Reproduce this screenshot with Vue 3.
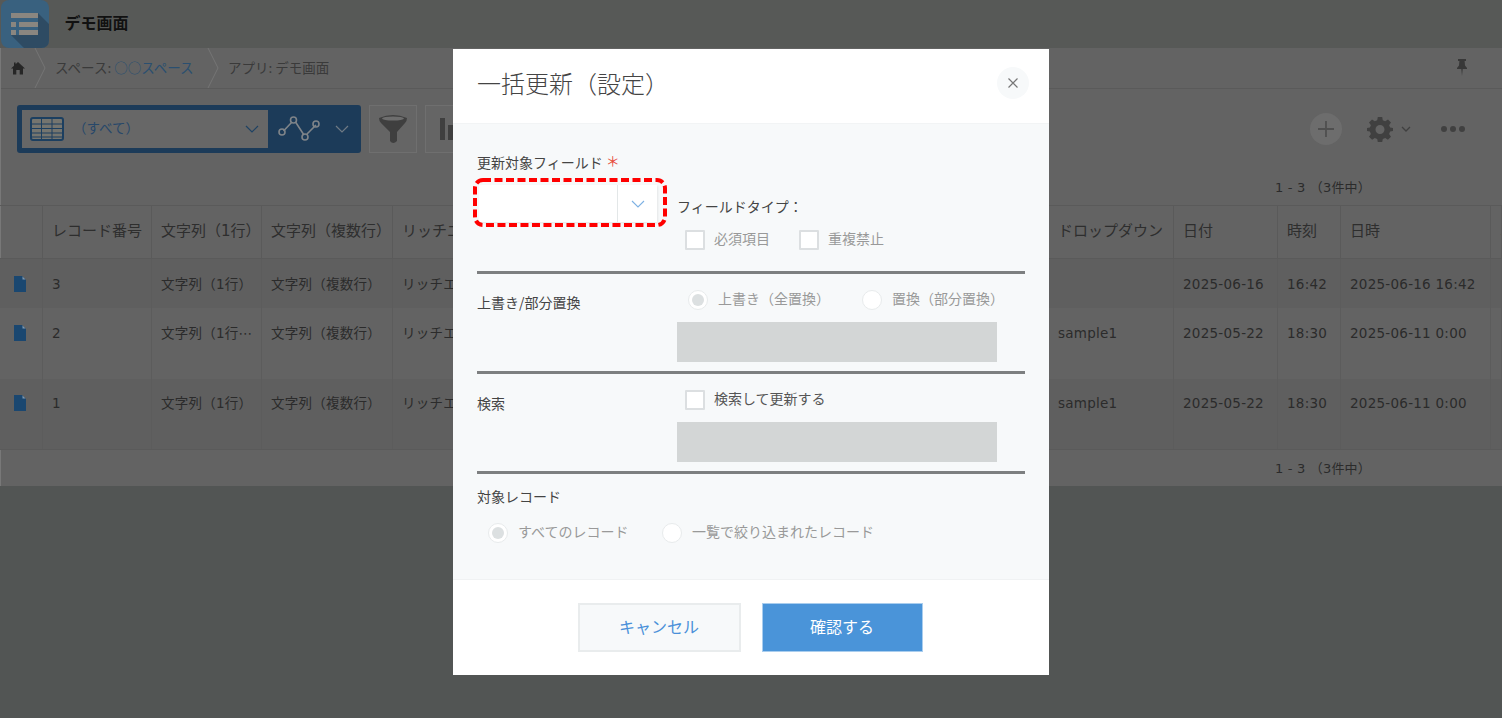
<script setup>
const cols = '43px 109px 110px 131px 656px 125px 104px 63px 150px 11px'
const headers = ['', 'レコード番号', '文字列（1行）', '文字列（複数行）', 'リッチエディター', 'ドロップダウン', '日付', '時刻', '日時', 'ユーザー']
const rows = [
  { id: 3, c1: '文字列（1行）', drop: '', d: '2025-06-16', t: '16:42', dt: '2025-06-16 16:42', cls: 'r1' },
  { id: 2, c1: '文字列（1行⋯', drop: 'sample1', d: '2025-05-22', t: '18:30', dt: '2025-06-11 0:00', cls: 'r2' },
  { id: 1, c1: '文字列（1行）', drop: 'sample1', d: '2025-05-22', t: '18:30', dt: '2025-06-11 0:00', cls: 'r3' }
]
</script>

<template>
  <div class="page">
    <header class="top">
      <svg class="appicon" width="49" height="48" viewBox="0 0 49 48">
        <rect x="1" width="48" height="48" rx="8" fill="#39617f" />
        <path d="M38 13 L49 24 L49 40 Q49 48 41 48 L24 48 L11 35 L38 35 Z" fill="#2e4b63" />
        <rect x="11" y="13" width="27" height="5" fill="#8a8680" />
        <rect x="11" y="22" width="5" height="5" fill="#8a8680" />
        <rect x="19" y="22" width="19" height="5" fill="#8a8680" />
        <rect x="11" y="30" width="5" height="5" fill="#8a8680" />
        <rect x="19" y="30" width="19" height="5" fill="#8a8680" />
      </svg>
      <span class="apptitle">デモ画面</span>
    </header>

    <div class="main">
      <nav class="crumbs">
        <svg class="home" width="16" height="16" viewBox="0 0 16 16"><path d="M8 2 L15 8.5 L13 8.5 L13 14.5 L9.7 14.5 L9.7 10 L6.3 10 L6.3 14.5 L3 14.5 L3 8.5 L1 8.5 L4 5.7 L4 2.5 L5.6 2.5 L5.6 4.2 Z" fill="#262626" /></svg>
        <svg class="sep" width="12" height="40" viewBox="0 0 12 40"><path d="M1 0 L11 20 L1 40" fill="none" stroke="#757575" /></svg>
        <span class="crumb first">スペース: <a>○○スペース</a></span>
        <svg class="sep" width="12" height="40" viewBox="0 0 12 40"><path d="M1 0 L11 20 L1 40" fill="none" stroke="#757575" /></svg>
        <span class="crumb">アプリ: デモ画面</span>
        <svg class="pin" width="12" height="18" viewBox="0 0 12 18"><path d="M2 1 H10 V3 H8.600 L9 7.500 L11 10 V11 H6.700 L6 18 L5.300 11 H1 V10 L3 7.500 L3.400 3 H2 Z" fill="#383838" /></svg>
      </nav>

      <div class="toolbar">
        <div class="viewbox">
          <div class="viewsel">
            <svg width="34" height="24" viewBox="0 0 34 24">
              <rect x="1" y="1" width="32" height="22" rx="2" fill="#75756f" stroke="#1c3f60" stroke-width="2" />
              <path d="M1 7 H33 M1 11.500 H33 M1 16 H33 M1 20 H33 M11.500 2 V23 M22 2 V23" stroke="#1c3f60" stroke-width="1" fill="none" />
            </svg>
            <span class="viewname">（すべて）</span>
            <svg class="chev" width="14" height="8" viewBox="0 0 14 8"><path d="M1 1 L7 7 L13 1" fill="none" stroke="#1f4263" stroke-width="1.200" /></svg>
          </div>
          <svg class="graph" width="42" height="26" viewBox="0 0 42 26">
            <path d="M5.500 15 L14 6 M17.500 6 L26 19 M29 18 L38 9" stroke="#7f8489" stroke-width="1.600" fill="none" />
            <circle cx="4" cy="16" r="3" fill="none" stroke="#7f8489" stroke-width="1.600" />
            <circle cx="15.500" cy="4" r="3" fill="none" stroke="#7f8489" stroke-width="1.600" />
            <circle cx="27" cy="21" r="3" fill="none" stroke="#7f8489" stroke-width="1.600" />
            <circle cx="38" cy="8" r="3" fill="none" stroke="#7f8489" stroke-width="1.600" />
          </svg>
          <svg class="chev2" width="14" height="8" viewBox="0 0 14 8"><path d="M1 1 L7 7 L13 1" fill="none" stroke="#6f7a85" stroke-width="1.200" /></svg>
        </div>
        <button class="tool">
          <svg width="30" height="30" viewBox="0 0 30 30">
            <path d="M1 4 Q15 -2 29 4 Q29 7 27 9 L19 18 V27 Q15 31 12 27 V18 L3 9 Q1 7 1 4 Z" fill="#3f3f3f" />
            <ellipse cx="15" cy="4.500" rx="11" ry="2" fill="#6e6e6e" />
          </svg>
        </button>
        <button class="tool">
          <svg width="30" height="30" viewBox="0 0 30 30">
            <rect x="6" y="4" width="5" height="22" fill="#3f3f3f" />
            <rect x="14" y="11" width="5" height="15" fill="#3f3f3f" />
          </svg>
        </button>
        <div class="tool-right">
          <span class="plus"><svg width="20" height="20" viewBox="0 0 20 20"><path d="M10 2 V18 M2 10 H18" stroke="#4f4f4f" stroke-width="1.800" /></svg></span>
          <svg class="gear" width="26" height="26" viewBox="0 0 26 26">
            <path d="M10.800 1 H15.200 L15.800 4.300 L18.200 5.300 L21 3.400 L24 6.500 L22.100 9.200 L23.100 11.600 L26 12 V15 L23.100 15.600 L22.100 18 L24 20.700 L20.900 23.800 L18.200 21.900 L15.800 22.900 L15.200 26 H10.800 L10.200 22.900 L7.800 21.900 L5.100 23.800 L2 20.700 L3.900 18 L2.900 15.600 L0 15 V12 L2.900 11.600 L3.900 9.200 L2 6.500 L5 3.400 L7.800 5.300 L10.200 4.300 Z M13 9 A4.500 4.500 0 1 0 13 18 A4.500 4.500 0 1 0 13 9 Z" fill="#404040" fill-rule="evenodd" />
          </svg>
          <svg class="minichev" width="10" height="6" viewBox="0 0 10 6"><path d="M1 1 L5 5 L9 1" fill="none" stroke="#404040" stroke-width="1.300" /></svg>
          <svg class="dots" width="26" height="8" viewBox="0 0 26 8"><circle cx="4" cy="4" r="3" fill="#404040" /><circle cx="13" cy="4" r="3" fill="#404040" /><circle cx="22" cy="4" r="3" fill="#404040" /></svg>
        </div>
      </div>

      <div class="count upper">1 - 3 （3件中）</div>

      <div class="table">
        <div class="row head" :style="{ gridTemplateColumns: cols }">
          <div v-for="(h, i) in headers" :key="i" class="th"><span :class="{ clip: i === 4 }">{{ h }}</span></div>
        </div>
        <div v-for="r in rows" :key="r.id" class="row" :class="r.cls" :style="{ gridTemplateColumns: cols }">
          <div class="td icon">
            <svg width="12" height="16" viewBox="0 0 12 16"><path d="M0 0 H8 L12 4 V16 H0 Z" fill="#1a4770" /><path d="M8.500 0.500 L11.500 3.500 H8.500 Z" fill="#7f97ad" /></svg>
          </div>
          <div class="td">{{ r.id }}</div>
          <div class="td">{{ r.c1 }}</div>
          <div class="td">文字列（複数行）</div>
          <div class="td"><span class="clip">リッチエディター</span></div>
          <div class="td">{{ r.drop }}</div>
          <div class="td">{{ r.d }}</div>
          <div class="td">{{ r.t }}</div>
          <div class="td">{{ r.dt }}</div>
          <div class="td"></div>
        </div>
      </div>

      <div class="count lower">1 - 3 （3件中）</div>
    </div>

    <div class="modal">
      <div class="m-head">
        <h1>一括更新（設定）</h1>
        <span class="close"><svg width="10" height="10" viewBox="0 0 10 10"><path d="M0.500 0.500 L9.500 9.500 M9.500 0.500 L0.500 9.500" stroke="#777" stroke-width="1.200" /></svg></span>
      </div>

      <div class="m-body">
        <section class="sec s1">
          <div class="left">
            <div class="lbl">更新対象フィールド<span class="req">＊</span></div>
            <div class="select">
              <span class="sel-arrow"><svg width="14" height="8" viewBox="0 0 14 8"><path d="M1 1 L7 7 L13 1" fill="none" stroke="#7db1e3" stroke-width="1.100" /></svg></span>
              <svg class="dash" width="194" height="49" viewBox="0 0 194 49">
                <rect x="2" y="2" width="190" height="45" rx="8" fill="none" stroke="#ff0000" stroke-width="4" stroke-dasharray="8 3.500" />
              </svg>
            </div>
          </div>
          <div class="right">
            <div class="lbl">フィールドタイプ：</div>
            <div class="checks">
              <label class="chk dim"><i class="box"></i><span>必須項目</span></label>
              <label class="chk dim"><i class="box"></i><span>重複禁止</span></label>
            </div>
          </div>
        </section>

        <section class="sec s2">
          <div class="left"><div class="lbl">上書き/部分置換</div></div>
          <div class="right">
            <div class="radios">
              <label class="rad dim w174"><i class="circle on"></i><span>上書き（全置換）</span></label>
              <label class="rad dim"><i class="circle"></i><span>置換（部分置換）</span></label>
            </div>
            <div class="graybox"></div>
          </div>
        </section>

        <section class="sec s3">
          <div class="left"><div class="lbl">検索</div></div>
          <div class="right">
            <label class="chk"><i class="box"></i><span>検索して更新する</span></label>
            <div class="graybox"></div>
          </div>
        </section>

        <section class="s4">
          <div class="lbl">対象レコード</div>
          <div class="radios indent">
            <label class="rad dim w174"><i class="circle on"></i><span>すべてのレコード</span></label>
            <label class="rad dim"><i class="circle"></i><span>一覧で絞り込まれたレコード</span></label>
          </div>
        </section>
      </div>

      <div class="m-foot">
        <button class="btn cancel">キャンセル</button>
        <button class="btn ok">確認する</button>
      </div>
    </div>
  </div>
</template>

<style>
html, body { margin: 0; background: #525554; }
</style>

<style scoped>
.page {
  position: relative;
  width: 1502px;
  height: 718px;
  overflow: hidden;
  background: #525554;
  color: #2b2b2b;
  font-family: "Noto Sans CJK JP", "Noto Sans", sans-serif;
  font-size: 14px;
}
.top {
  height: 48px;
  background: #575957;
  display: flex;
  align-items: center;
}
.appicon { display: block; flex: none; }
.apptitle {
  margin-left: 15.500px;
  font-size: 16px;
  font-weight: 700;
  color: #111;
  position: relative;
  top: -2px;
}
.main {
  background: #636363;
  height: 438px;
  border-left: 1px solid #787878;
  box-sizing: border-box;
}
.crumbs {
  height: 41px;
  box-sizing: border-box;
  border-bottom: 1px solid #5a5a5a;
  display: flex;
  align-items: center;
  color: #3a3a3a;
  font-size: 13.500px;
}
.home { margin-left: 9px; margin-right: 8px; }
.sep { flex: none; }
.crumb { margin-left: 9px; white-space: nowrap; position: relative; top: -1px; }
.crumb.first { width: 143px; margin-right: 9px; }
.crumb a { color: #2a4f70; }
.pin { margin-left: auto; margin-right: 34px; position: relative; top: -1px; }

.toolbar {
  height: 48px;
  margin-top: 16px;
  padding-left: 16px;
  display: flex;
  gap: 8px;
  align-items: stretch;
}
.viewbox {
  width: 344px;
  box-sizing: border-box;
  background: #1c3b59;
  border-radius: 3px;
  padding: 5px;
  display: flex;
  align-items: center;
}
.viewsel {
  width: 246px;
  height: 38px;
  background: #676767;
  display: flex;
  align-items: center;
  padding-left: 8px;
  box-sizing: border-box;
  flex: none;
}
.viewname {
  margin-left: 9px;
  color: #27486a;
  font-size: 13.500px;
  position: relative;
  top: -2px;
}
.chev { margin-left: auto; margin-right: 9px; }
.graph { margin-left: 10px; }
.chev2 { margin-left: 15px; }
.tool {
  width: 48px;
  height: 48px;
  padding: 0;
  background: #656565;
  border: 1px solid #6f6f6f;
  display: flex;
  align-items: center;
  justify-content: center;
  box-sizing: border-box;
}
.tool-right {
  margin-left: auto;
  display: flex;
  align-items: center;
  padding-right: 36px;
}
.plus {
  width: 32px;
  height: 32px;
  border-radius: 50%;
  background: #6d6d6d;
  display: flex;
  align-items: center;
  justify-content: center;
}
.gear { margin-left: 25px; }
.minichev { margin-left: 8px; }
.dots { margin-left: 29px; }

.count {
  text-align: right;
  padding-right: 131px;
  font-family: "DejaVu Sans", "Noto Sans CJK JP", sans-serif;
  font-size: 13px;
  letter-spacing: 0.200px;
  line-height: 20px;
  color: #2b2b2b;
}
.upper { margin-top: 25px; height: 27px; }
.lower { padding-top: 9px; height: 27px; }

.table { border-top: 1px solid #5a5a5a; border-bottom: 1px solid #5a5a5a; margin-left: -1px; }
.row { display: grid; box-sizing: border-box; }
.head { height: 53px; border-bottom: 1px solid #5a5a5a; }
.th {
  border-right: 1px solid #5a5a5a;
  padding-left: 9px;
  font-family: "DejaVu Sans", "Noto Sans CJK JP", sans-serif;
  font-size: 15px;
  line-height: 50px;
  white-space: nowrap;
  overflow: hidden;
  color: #2e2e2e;
}
.td {
  border-right: 1px solid #5c5c5c;
  padding: 14px 0 0 9px;
  font-family: "DejaVu Sans", "Noto Sans CJK JP", sans-serif;
  font-size: 13.500px;
  letter-spacing: 0.250px;
  line-height: 22px;
  white-space: nowrap;
  overflow: hidden;
  color: #2b2b2b;
}
.clip { display: block; width: 51px; overflow: hidden; }
.td.icon { padding: 17px 0 0 14px; }
.td svg { display: block; }
.r1 { height: 49px; background: #5f5f5f; }
.r2 { height: 71px; background: #636363; }
.r3 { height: 70px; background: #5f5f5f; }
.r3 .td { padding-top: 13px; }
.r3 .td.icon { padding-top: 16px; }

.modal {
  position: absolute;
  left: 453px;
  top: 49px;
  width: 596px;
  height: 626px;
  background: #fff;
  display: flex;
  flex-direction: column;
  color: #3a3a3a;
}
.m-head {
  height: 75px;
  flex: none;
  display: flex;
  align-items: center;
  justify-content: space-between;
  padding: 0 20px 0 24px;
  box-sizing: border-box;
  border-bottom: 1px solid #f2f4f5;
}
.m-head h1 {
  margin: 0;
  font-size: 24px;
  font-weight: 300;
  color: #444;
  position: relative;
  top: -4px;
}
.close {
  width: 32px;
  height: 32px;
  border-radius: 50%;
  background: #f7f9fa;
  display: flex;
  align-items: center;
  justify-content: center;
  position: relative;
  top: -3px;
}
.m-body {
  flex: 1;
  background: #f7f9fa;
  padding: 0 24px;
}
.sec {
  display: flex;
  box-sizing: border-box;
  border-bottom: 3px solid #7d7f80;
}
.left { width: 200px; flex: none; }
.right { flex: 1; }
.lbl { font-size: 14px; line-height: 20px; color: #444; white-space: nowrap; position: relative; top: -1px; }
.req { color: #e74c3c; margin-left: 3px; font-size: 14px; position: relative; top: -2px; }

.s1 { height: 150px; padding-top: 29px; }
.s1 .right { padding-top: 44px; }
.select {
  position: relative;
  margin: 12px 0 0 2px;
  width: 178px;
  height: 37px;
  background: #fff;
  box-shadow: 1px 1px 2px rgba(0, 0, 0, .08);
}
.sel-arrow {
  position: absolute;
  right: 0;
  top: 0;
  width: 40px;
  height: 37px;
  border-left: 1px solid #e3e7e8;
  display: flex;
  align-items: center;
  justify-content: center;
  box-sizing: border-box;
}
.dash { position: absolute; left: -6px; top: -7px; }
.checks { display: flex; gap: 29px; margin-top: 13px; padding-left: 8px; }

.chk { display: flex; align-items: center; height: 20px; font-size: 14px; color: #555; white-space: nowrap; }
.dim { color: #999; }
.chk span, .rad span { position: relative; top: -2px; }
.box {
  width: 20px;
  height: 20px;
  box-sizing: border-box;
  background: #fff;
  border: 2px solid #dcdfe1;
  border-radius: 1px;
  margin-right: 9px;
  flex: none;
}
.s3 .chk { margin-left: 8px; }

.s2 { height: 100px; padding-top: 16px; }
.s3 { height: 100px; padding-top: 16px; }
.s2 .left { padding-top: 3px; }
.s3 .left { padding-top: 4px; }
.radios { display: flex; }
.s2 .radios { padding-left: 11px; }
.rad { display: flex; align-items: center; height: 20px; white-space: nowrap; font-size: 14px; }
.w174 { width: 174px; }
.circle {
  width: 20px;
  height: 20px;
  box-sizing: border-box;
  border-radius: 50%;
  background: #fff;
  border: 1px solid #e8ebec;
  margin-right: 10px;
  flex: none;
  position: relative;
}
.circle.on::after {
  content: "";
  position: absolute;
  left: 3px;
  top: 3px;
  width: 12px;
  height: 12px;
  border-radius: 50%;
  background: #dce0e1;
}
.graybox {
  margin-top: 12px;
  width: 320px;
  height: 40px;
  background: #d3d6d6;
}
.s4 { padding-top: 13px; }
.indent { margin-top: 16px; padding-left: 11px; }

.m-foot {
  height: 96px;
  flex: none;
  box-sizing: border-box;
  border-top: 1px solid #f0f2f3;
  padding-right: 2px;
  display: flex;
  align-items: center;
  justify-content: center;
  gap: 21px;
}
.btn {
  height: 49px;
  box-sizing: border-box;
  font-family: inherit;
  font-size: 16px;
  padding: 0 0 3px;
}
.cancel { width: 163px; background: #f7f9fa; border: 2px solid #e9eced; color: #4a90d9; }
.ok { width: 161px; background: #4a94d9; border: 1px solid #a9cdee; color: #fff; }
</style>
